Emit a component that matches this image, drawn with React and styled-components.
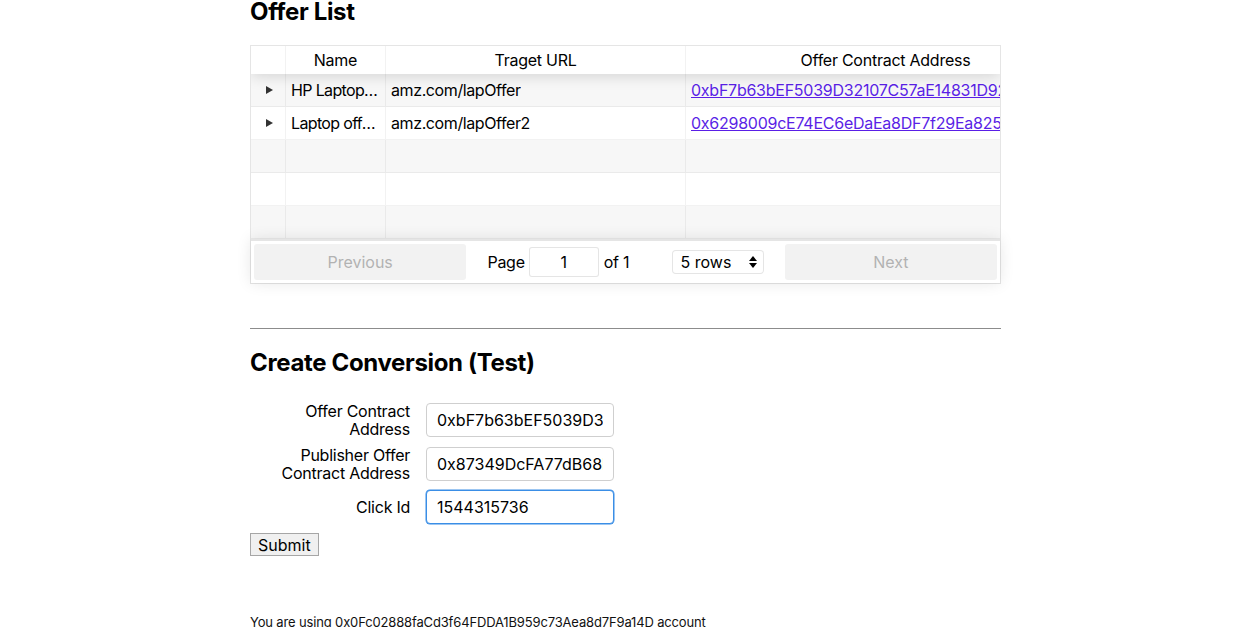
import React from "react";
import styled, { createGlobalStyle } from "styled-components";

const Global = createGlobalStyle`
  html, body { margin: 0; padding: 0; background: #fff; }
  body { font-family: Inter, "Noto Sans", sans-serif; color: #000; font-size: 16px; overflow: hidden; letter-spacing: -0.25px; }
  * { box-sizing: border-box; }
`;

const Page = styled.div`
  width: 751px;
  margin: 0 0 0 250px;
  display: flex;
  flex-direction: column;
`;

const Title = styled.h2`
  font-size: 24px;
  font-weight: 700;
  margin: ${(p) => p.$m};
  line-height: 29px;
  letter-spacing: -0.35px;
`;

const TableBox = styled.div`
  border: 1px solid rgba(0, 0, 0, 0.1);
  display: flex;
  flex-direction: column;
  position: relative;
`;

const Scroller = styled.div`
  overflow: hidden;
  display: flex;
  flex-direction: column;
`;

const HeadRow = styled.div`
  display: flex;
  box-shadow: 0 2px 15px 0 rgba(0, 0, 0, 0.15);
  position: relative;
  z-index: 1;
`;

const Th = styled.div`
  flex: 0 0 ${(p) => p.$w}px;
  width: ${(p) => p.$w}px;
  padding: 5px 5px 4px;
  line-height: 19px;
  text-align: center;
  border-right: 1px solid rgba(0, 0, 0, 0.05);
  white-space: nowrap;
`;

const Row = styled.div`
  display: flex;
  background: ${(p) => (p.$odd ? "rgba(0,0,0,0.03)" : "#fff")};
  border-bottom: 1px solid rgba(0, 0, 0, 0.05);
  height: 33px;
`;

const Td = styled.div`
  flex: 0 0 ${(p) => p.$w}px;
  width: ${(p) => p.$w}px;
  padding: 6px 5px;
  line-height: 19px;
  border-right: 1px solid rgba(0, 0, 0, 0.05);
  white-space: nowrap;
  overflow: hidden;
  display: flex;
  align-items: center;
  justify-content: ${(p) => (p.$center ? "center" : "flex-start")};
`;

const CellText = styled.span`
  overflow: hidden;
  text-overflow: ellipsis;
  white-space: nowrap;
  min-width: 0;
  letter-spacing: ${(p) => (p.$tight ? "-0.65px" : "-0.4px")};
`;

const Expander = styled.span`
  width: 0;
  height: 0;
  border-left: 7px solid rgba(0, 0, 0, 0.8);
  border-top: 4px solid transparent;
  border-bottom: 4px solid transparent;
  margin-left: 2px;
`;

const Link = styled.a`
  color: #5a1fe6;
  text-decoration: underline;
  white-space: nowrap;
`;

const Pagination = styled.div`
  display: flex;
  justify-content: space-between;
  align-items: stretch;
  padding: 3px;
  border-top: 2px solid rgba(0, 0, 0, 0.1);
  box-shadow: 0 0 15px 0 rgba(0, 0, 0, 0.1);
  position: relative;
  z-index: 1;
  background: #fff;
`;

const PageBtn = styled.button`
  flex: 1 1 0;
  min-width: 0;
  padding: 0;
  height: 36px;
  border: none;
  border-radius: 3px;
  background: #f2f2f2;
  color: #b2b2b2;
  font: inherit;
  font-size: 16px;
`;

const Center = styled.div`
  flex: 1.5 1 0;
  min-width: 0;
  display: flex;
  align-items: center;
  justify-content: space-around;
`;

const PageInfo = styled.span`
  display: flex;
  align-items: center;
  gap: 4px;
`;

const PageInput = styled.input`
  width: 70px;
  height: 30px;
  border: 1px solid rgba(0, 0, 0, 0.1);
  border-radius: 3px;
  text-align: center;
  font: inherit;
  font-size: 16px;
  padding: 0 7px;
  margin: 0 1px 0 0;
  outline: none;
`;

const SelectWrap = styled.span`
  position: relative;
  display: inline-flex;
`;

const Select = styled.select`
  appearance: none;
  -webkit-appearance: none;
  width: 92px;
  height: 24px;
  border: 1px solid rgba(0, 0, 0, 0.1);
  border-radius: 4px;
  background: #fff;
  font: inherit;
  font-size: 16px;
  padding: 0 8px;
  color: #000;
`;

const SelectArrows = styled.svg`
  position: absolute;
  right: 7px;
  top: 6px;
  pointer-events: none;
`;

const Divider = styled.hr`
  border: none;
  border-top: 1px solid #8c8c8c;
  margin: 44px 0 0;
  width: 100%;
`;

const Form = styled.form`
  display: flex;
  flex-direction: column;
  gap: 8px;
`;

const FieldRow = styled.div`
  display: flex;
  align-items: center;
  gap: 16px;
`;

const Label = styled.label`
  width: 160px;
  text-align: right;
  line-height: 18px;
  font-size: 16px;
`;

const Input = styled.input`
  width: 188px;
  height: 34px;
  border: 1px solid ${(p) => (p.$focus ? "#3a8ee6" : "#cfcfcf")};
  border-radius: 4px;
  padding: 0 10px;
  font: inherit;
  font-size: 16px;
  outline: none;
  color: #000;
  box-shadow: ${(p) => (p.$focus ? "0 0 0 0.5px #3a8ee6" : "none")};
`;

const Submit = styled.button`
  align-self: flex-start;
  height: 23px;
  padding: 0 7px;
  font: inherit;
  font-size: 16px;
  background: #f0f0f0;
  border: 1px solid #a6a6a6;
  border-radius: 0;
  color: #000;
  margin-top: 1px;
`;

const Footer = styled.p`
  font-size: 13px;
  margin: 58px 0 0;
  line-height: 16px;
  color: #111;
  letter-spacing: -0.15px;
`;

const cols = [35, 100, 300, 400];

const rows = [
  { name: "HP Laptop Offer", url: "amz.com/lapOffer", addr: "0xbF7b63bEF5039D32107C57aE14831D9247b6bA1e" },
  { name: "Laptop offer 2", url: "amz.com/lapOffer2", addr: "0x6298009cE74EC6eDaEa8DF7f29Ea825c9Db1E2F8" },
  null,
  null,
  null,
];

export default function App() {
  return (
    <>
      <Global />
      <Page>
        <Title $m="-3px 0 19px">Offer List</Title>
        <TableBox>
          <Scroller>
            <HeadRow>
              <Th $w={cols[0]} />
              <Th $w={cols[1]}>Name</Th>
              <Th $w={cols[2]}>Traget URL</Th>
              <Th $w={cols[3]}>Offer Contract Address</Th>
            </HeadRow>
            {rows.map((r, i) => (
              <Row key={i} $odd={i % 2 === 0}>
                <Td $w={cols[0]} $center>{r && <Expander />}</Td>
                <Td $w={cols[1]}>{r && <CellText $tight>{r.name}</CellText>}</Td>
                <Td $w={cols[2]}>{r && <CellText>{r.url}</CellText>}</Td>
                <Td $w={cols[3]}>{r && <Link href="#">{r.addr}</Link>}</Td>
              </Row>
            ))}
          </Scroller>
          <Pagination>
            <PageBtn disabled>Previous</PageBtn>
            <Center>
              <PageInfo>
                Page <PageInput defaultValue="1" /> of 1
              </PageInfo>
              <SelectWrap>
                <Select defaultValue="5">
                  <option value="5">5 rows</option>
                  <option value="10">10 rows</option>
                </Select>
                <SelectArrows width="8" height="12" viewBox="0 0 8 12">
                  <path d="M4 0 L8 5 H0 Z" fill="#000" />
                  <path d="M4 12 L8 7 H0 Z" fill="#000" />
                </SelectArrows>
              </SelectWrap>
            </Center>
            <PageBtn disabled>Next</PageBtn>
          </Pagination>
        </TableBox>
        <Divider />
        <Title $m="19px 0 25px">Create Conversion (Test)</Title>
        <Form onSubmit={(e) => e.preventDefault()}>
          <FieldRow>
            <Label>Offer Contract Address</Label>
            <Input defaultValue="0xbF7b63bEF5039D32107C57aE14831D9247b6bA1e" />
          </FieldRow>
          <FieldRow>
            <Label>Publisher Offer Contract Address</Label>
            <Input defaultValue="0x87349DcFA77dB68F1dD7c8A3b6E4aF1c4D2e9B30" />
          </FieldRow>
          <FieldRow>
            <Label>Click Id</Label>
            <Input $focus autoFocus defaultValue="1544315736" />
          </FieldRow>
          <Submit type="submit">Submit</Submit>
        </Form>
        <Footer>You are using 0x0Fc02888faCd3f64FDDA1B959c73Aea8d7F9a14D account</Footer>
      </Page>
    </>
  );
}
